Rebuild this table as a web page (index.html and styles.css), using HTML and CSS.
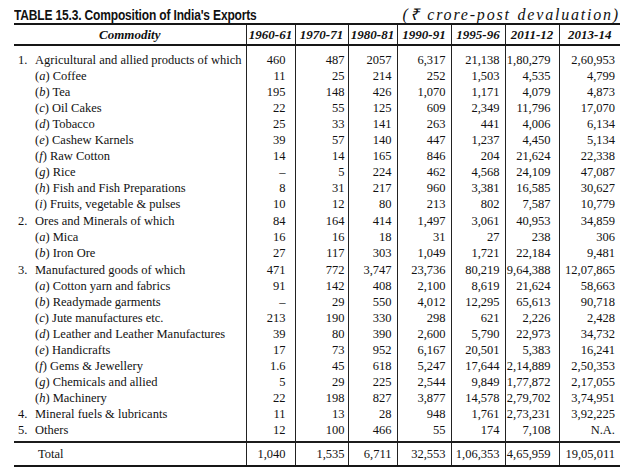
FILE: index.html
```html
<!DOCTYPE html>
<html lang="en">
<head>
<meta charset="utf-8">
<title>Composition of India's Exports</title>
<link rel="stylesheet" href="styles.css">
</head>
<body>
<div class="page">
  <div class="title-row">
    <h1 class="title">TABLE 15.3. Composition of India's Exports</h1>
    <span class="unit">(₹ crore-post devaluation)</span>
  </div>
  <table class="exports">
    <colgroup>
      <col class="c-label"><col class="c-a"><col class="c-b"><col class="c-c"><col class="c-d"><col class="c-e"><col class="c-f"><col class="c-g">
    </colgroup>
    <thead>
      <tr><th>Commodity</th><th>1960-61</th><th>1970-71</th><th>1980-81</th><th>1990-91</th><th>1995-96</th><th>2011-12</th><th>2013-14</th></tr>
    </thead>
    <tbody>
      <tr class="group first"><td><span class="num">1.</span>Agricultural and allied products of which</td><td>460</td><td>487</td><td>2057</td><td>6,317</td><td>21,138</td><td>1,80,279</td><td>2,60,953</td></tr>
      <tr class="sub"><td>(<i>a</i>) Coffee</td><td>11</td><td>25</td><td>214</td><td>252</td><td>1,503</td><td>4,535</td><td>4,799</td></tr>
      <tr class="sub"><td>(<i>b</i>) Tea</td><td>195</td><td>148</td><td>426</td><td>1,070</td><td>1,171</td><td>4,079</td><td>4,873</td></tr>
      <tr class="sub"><td>(<i>c</i>) Oil Cakes</td><td>22</td><td>55</td><td>125</td><td>609</td><td>2,349</td><td>11,796</td><td>17,070</td></tr>
      <tr class="sub"><td>(<i>d</i>) Tobacco</td><td>25</td><td>33</td><td>141</td><td>263</td><td>441</td><td>4,006</td><td>6,134</td></tr>
      <tr class="sub"><td>(<i>e</i>) Cashew Karnels</td><td>39</td><td>57</td><td>140</td><td>447</td><td>1,237</td><td>4,450</td><td>5,134</td></tr>
      <tr class="sub"><td>(<i>f</i>) Raw Cotton</td><td>14</td><td>14</td><td>165</td><td>846</td><td>204</td><td>21,624</td><td>22,338</td></tr>
      <tr class="sub"><td>(<i>g</i>) Rice</td><td>–</td><td>5</td><td>224</td><td>462</td><td>4,568</td><td>24,109</td><td>47,087</td></tr>
      <tr class="sub"><td>(<i>h</i>) Fish and Fish Preparations</td><td>8</td><td>31</td><td>217</td><td>960</td><td>3,381</td><td>16,585</td><td>30,627</td></tr>
      <tr class="sub"><td>(<i>i</i>) Fruits, vegetable &amp; pulses</td><td>10</td><td>12</td><td>80</td><td>213</td><td>802</td><td>7,587</td><td>10,779</td></tr>
      <tr class="group"><td><span class="num">2.</span>Ores and Minerals of which</td><td>84</td><td>164</td><td>414</td><td>1,497</td><td>3,061</td><td>40,953</td><td>34,859</td></tr>
      <tr class="sub"><td>(<i>a</i>) Mica</td><td>16</td><td>16</td><td>18</td><td>31</td><td>27</td><td>238</td><td>306</td></tr>
      <tr class="sub"><td>(<i>b</i>) Iron Ore</td><td>27</td><td>117</td><td>303</td><td>1,049</td><td>1,721</td><td>22,184</td><td>9,481</td></tr>
      <tr class="group"><td><span class="num">3.</span>Manufactured goods of which</td><td>471</td><td>772</td><td>3,747</td><td>23,736</td><td>80,219</td><td>9,64,388</td><td>12,07,865</td></tr>
      <tr class="sub"><td>(<i>a</i>) Cotton yarn and fabrics</td><td>91</td><td>142</td><td>408</td><td>2,100</td><td>8,619</td><td>21,624</td><td>58,663</td></tr>
      <tr class="sub"><td>(<i>b</i>) Readymade garments</td><td>–</td><td>29</td><td>550</td><td>4,012</td><td>12,295</td><td>65,613</td><td>90,718</td></tr>
      <tr class="sub"><td>(<i>c</i>) Jute manufactures etc.</td><td>213</td><td>190</td><td>330</td><td>298</td><td>621</td><td>2,226</td><td>2,428</td></tr>
      <tr class="sub"><td>(<i>d</i>) Leather and Leather Manufactures</td><td>39</td><td>80</td><td>390</td><td>2,600</td><td>5,790</td><td>22,973</td><td>34,732</td></tr>
      <tr class="sub"><td>(<i>e</i>) Handicrafts</td><td>17</td><td>73</td><td>952</td><td>6,167</td><td>20,501</td><td>5,383</td><td>16,241</td></tr>
      <tr class="sub"><td>(<i>f</i>) Gems &amp; Jewellery</td><td>1.6</td><td>45</td><td>618</td><td>5,247</td><td>17,644</td><td>2,14,889</td><td>2,50,353</td></tr>
      <tr class="sub"><td>(<i>g</i>) Chemicals and allied</td><td>5</td><td>29</td><td>225</td><td>2,544</td><td>9,849</td><td>1,77,872</td><td>2,17,055</td></tr>
      <tr class="sub"><td>(<i>h</i>) Machinery</td><td>22</td><td>198</td><td>827</td><td>3,877</td><td>14,578</td><td>2,79,702</td><td>3,74,951</td></tr>
      <tr class="item"><td><span class="num">4.</span>Mineral fuels &amp; lubricants</td><td>11</td><td>13</td><td>28</td><td>948</td><td>1,761</td><td>2,73,231</td><td>3,92,225</td></tr>
      <tr class="item last"><td><span class="num">5.</span>Others</td><td>12</td><td>100</td><td>466</td><td>55</td><td>174</td><td>7,108</td><td>N.A.</td></tr>
    </tbody>
    <tfoot>
      <tr><td>Total</td><td>1,040</td><td>1,535</td><td>6,711</td><td>32,553</td><td>1,06,353</td><td>4,65,959</td><td>19,05,011</td></tr>
    </tfoot>
  </table>
</div>
</body>
</html>
```
FILE: styles.css
```css
html, body {
  margin: 0;
  padding: 0;
  background: #ffffff;
}

body {
  color: #111111;
  font-family: "Liberation Serif", "Times New Roman", serif;
}

.page {
  width: 606px;
  padding: 0 4px 0 14px;
}

.title-row {
  display: flex;
  justify-content: space-between;
  align-items: baseline;
  height: 23px;
  box-sizing: border-box;
  padding-top: 3px;
}

.title {
  margin: 0;
  display: inline-block;
  font-family: "Liberation Sans", Arial, sans-serif;
  font-size: 15px;
  font-weight: bold;
  line-height: 16px;
  letter-spacing: -0.2px;
  transform: scaleX(0.8);
  transform-origin: left center;
  white-space: nowrap;
}

.unit {
  font-style: italic;
  font-size: 16px;
  letter-spacing: 1.8px;
  word-spacing: 1px;
  white-space: nowrap;
}

.exports {
  width: 606px;
  table-layout: fixed;
  border-collapse: collapse;
  border-top: 2px solid #161616;
  border-bottom: 2px solid #161616;
  font-size: 12.5px;
}

.c-label { width: 232px; }
.c-a { width: 49px; }
.c-b { width: 53px; }
.c-c { width: 49px; }
.c-d { width: 54px; }
.c-e { width: 54px; }
.c-f { width: 54px; }
.c-g { width: 61px; }

.exports th {
  height: 19px;
  padding: 0;
  font-size: 13px;
  font-style: italic;
  font-weight: bold;
  text-align: center;
  border-bottom: 2px solid #161616;
  border-left: 1px solid #222;
}

.exports th:first-child {
  border-left: none;
}

.exports td {
  height: 16px;
  padding: 0 5px 0 0;
  line-height: 16px;
  text-align: right;
  white-space: nowrap;
  border-left: 1px solid #222;
}

.exports td:first-child {
  text-align: left;
  border-left: none;
}

.exports td:nth-child(2) { padding-right: 9px; }
.exports td:nth-child(3) { padding-right: 3px; }
.exports td:nth-child(7) { padding-right: 8px; }

.group td:first-child,
.item td:first-child {
  padding-left: 4px;
}

.sub td:first-child {
  padding-left: 21px;
}

.num {
  display: inline-block;
  width: 17px;
}

.group td {
  padding-top: 1px;
}

.first td {
  padding-top: 6px;
}

.last td {
  padding-bottom: 3px;
}

.exports tfoot td {
  height: 22px;
  line-height: 22px;
  border-top: 2px solid #1c1c1c;
}

.exports tfoot td:first-child {
  padding-left: 24px;
}
```
